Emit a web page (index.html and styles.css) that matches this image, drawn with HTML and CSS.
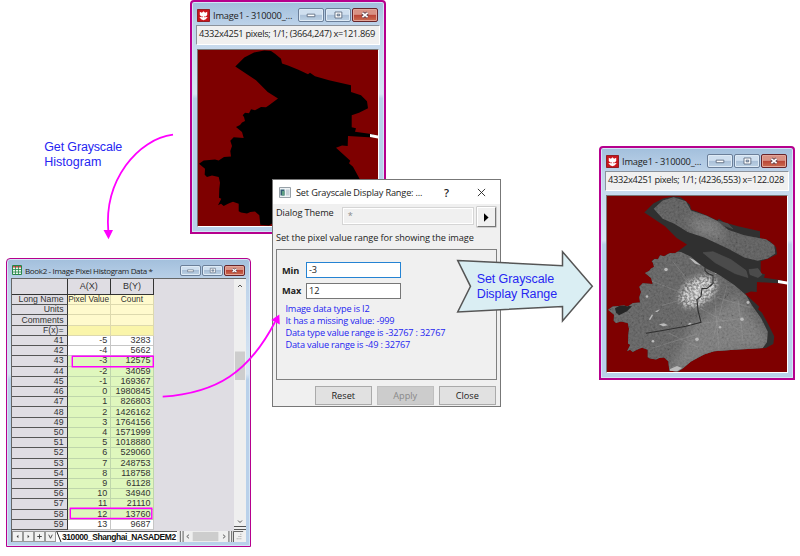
FILE: index.html
```
<!DOCTYPE html>
<html lang="en">
<head>
<meta charset="utf-8">
<title>Set Grayscale Display Range</title>
<link rel="stylesheet" href="styles.css">
</head>
<body>
<svg class="defs" aria-hidden="true">
  <defs>
    <path id="land" d="M234.3 66L243.3 57 253 52 263.3 50 270 50.500 274 53.300 280 58.300 281 63 287 65 298 69.500 307 74 309 72.500 314 76 328 80 350 85V91.700L360 95 366 101 367 108 358 112.700 350.700 115V127.300L355 128.300 354 131.700 372 134.200V137.500L347 136 346.700 146 341 145.500 335 147.700 349.300 161 348 163.300 352 167 358 178 364.300 190.700 363.300 198.300 356 202.300 342 203 324.300 204 304 205.700 294 209 281 216 272.700 223 268 226 259.300 225.300 258.300 215.700 254 212 249.300 212.300 246 214 240 213 237.700 211.700V204L232 202 229.300 203 227 204 222.700 206.300 220 204 217 205.700 220.300 199 218 198 218.300 189 219 183 217.700 177.300 211 175.700 206 177.300 203.700 175 204 169 198 164 202.700 160.700 214 159.500 217.700 160.700 223 157 230 156.700 229.300 151 231 146 229.300 140.700 232.700 137.300 242.700 138 241 132 235 127 239 125 241 122.300 244 121 243 117 241.700 115 244 112.500 248 113 250 109 254 110 260 106.700 265 107 268 105 277 98.300 266.700 91.700 255 80Z"/>
    <clipPath id="mainland"><path d="M0 0L44.700 65.500 51 60.500 62 55 74 56.200 84 61.200 88 64.500 99 72.800 112.300 79.500 127.300 89.500 139 99.500 145.700 111.200 154 122.800 160.700 136.200 160 146.800 155.700 152.800 156 177H0Z"/></clipPath>
    <clipPath id="landclip"><use href="#land" transform="translate(-197 -49.500)"/></clipPath>
    <filter id="grain" x="0" y="0" width="1" height="1"><feTurbulence type="fractalNoise" baseFrequency=".45" numOctaves="3" seed="8"/><feColorMatrix values=".9 .4 .2 0 -.35 .9 .4 .2 0 -.35 .9 .4 .2 0 -.35 0 0 0 0 1"/></filter>
    <filter id="speckle" x="-.5" y="-.5" width="2" height="2"><feGaussianBlur in="SourceGraphic" stdDeviation="3" result="b"/><feTurbulence type="fractalNoise" baseFrequency=".5" numOctaves="2" seed="3"/><feColorMatrix values="0 0 0 0 1 0 0 0 0 1 0 0 0 0 1 5 0 0 0 -2"/><feComposite in="b" operator="in"/></filter>
    <filter id="soft" x="-.6" y="-.6" width="2.200" height="2.200"><feGaussianBlur stdDeviation="5"/></filter>
    <filter id="fine"><feGaussianBlur stdDeviation=".6"/></filter>
    <clipPath id="isle"><path d="M46.700 12.800L55.700 4.500 66.700 1.200 79 5.200 84 14.500 99 19.500 112.300 26.200 121 34 137.300 39.500 159 43.500 167.300 49.500 168.300 57.800 160.700 62.800 150.700 65.200 137.300 61.800 120.700 52.800 97.300 41.800 80.700 36.200 67.300 27.800 55.700 22.800Z"/></clipPath>
  </defs>
</svg>

<main class="canvas">
  <section class="window image-window first">
    <header class="titlebar">
      <svg class="app" viewBox="0 0 14 14"><path fill="#c9151c" stroke="#8d1519" d="M.5.5h13v13H.5z"/><path fill="#fff" d="M3 3l2.300 1L7 2.300 8.700 4 11 3v3.500L9.500 8h-5L3 6.500zM2.500 8.500L6.500 9v-1h1v1l4-.5-2 2.500-2.500 1-2.500-1z"/></svg>
      <h2>Image1 - 310000_...</h2>
      <div class="controls"><i><svg viewBox="0 0 24 14"><path class="glyph" d="M7.500 6h9v3h-9z"/></svg></i><i><svg viewBox="0 0 24 14"><path class="glyph" d="M8.500 3.500h8v7h-8zM11 6h3v2h-3z"/></svg></i><i class="x"><svg viewBox="0 0 24 14"><path class="cross" d="M9 4.500l6 5m0-5l-6 5"/><path class="crossin" d="M9 4.500l6 5m0-5l-6 5"/></svg></i></div>
    </header>
    <p class="info"><span>4332x4251 pixels; 1/1; (3664,247) x=121.869</span></p>
    <svg class="picture" viewBox="197 49.500 180 177" preserveAspectRatio="none"><path fill="#7e0000" d="M197 49h181v179H197z"/><use href="#land"/><path fill="#fff" d="M369 134l8.500 1.500v3l-8.500-1.600z"/></svg>
  </section>

  <section class="window image-window second">
    <header class="titlebar">
      <svg class="app" viewBox="0 0 14 14"><path fill="#c9151c" stroke="#8d1519" d="M.5.5h13v13H.5z"/><path fill="#fff" d="M3 3l2.300 1L7 2.300 8.700 4 11 3v3.500L9.500 8h-5L3 6.500zM2.500 8.500L6.500 9v-1h1v1l4-.5-2 2.500-2.500 1-2.500-1z"/></svg>
      <h2>Image1 - 310000_...</h2>
      <div class="controls"><i><svg viewBox="0 0 24 14"><path class="glyph" d="M7.500 6h9v3h-9z"/></svg></i><i><svg viewBox="0 0 24 14"><path class="glyph" d="M8.500 3.500h8v7h-8zM11 6h3v2h-3z"/></svg></i><i class="x"><svg viewBox="0 0 24 14"><path class="cross" d="M9 4.500l6 5m0-5l-6 5"/><path class="crossin" d="M9 4.500l6 5m0-5l-6 5"/></svg></i></div>
    </header>
    <p class="info"><span>4332x4251 pixels; 1/1; (4236,553) x=122.028</span></p>
    <svg class="picture" viewBox="0 0 180 177" preserveAspectRatio="none">
      <path fill="#7e0000" d="M0 0h180v177H0z"/>
      <use href="#land" transform="translate(-197 -49.500)" fill="#303030"/>
      <g clip-path="url(#isle)"><path fill="#575757" d="M40 0h130v70H40z"/><path filter="url(#soft)" fill="#777" d="M80 20l30 5 10 20-30-6z"/><path filter="url(#grain)" opacity=".16" d="M40 0h130v70H40z"/></g>
      <g fill="#4b4b4b" stroke="#555" stroke-width=".5"><path d="M96 57l10-1 18 8 15 11 2 7-13-4-20-11zM142 74l9-1 4 6-4 3-8-3zM111 25l10 3 5 5-11-4z"/></g>
      <g clip-path="url(#mainland)"><g clip-path="url(#landclip)">
        <path fill="#5c5c5c" d="M0 50h180v127H0z"/>
        <path filter="url(#soft)" fill="#777" d="M85 130l45-30 35 50-65 12-40 20z"/>
        <path filter="url(#grain)" opacity=".17" d="M0 50h180v127H0z"/>
        <ellipse cx="91" cy="96" rx="14" ry="9" fill="#bbb" opacity=".6" filter="url(#soft)" transform="rotate(-35 91 96)"/>
        <ellipse cx="91" cy="96" rx="21" ry="13" fill="#e2e2e2" filter="url(#speckle)" transform="rotate(-35 91 96)"/>
        <path d="M8 113l5-3 12 1-5 5-8 4-3-3z" fill="#252525"/>
        <g fill="none" stroke="#a8a8a8" stroke-width=".6" opacity=".5" filter="url(#fine)"><path d="M43 85l44 17M107 95l5 60M88 129l48-6M75 80l20 21M55 110l35-10M45 153l45-14M93 97l50 15M90 111l44 25M120 90l-14 54M62 138l29 14M66 66l24 30M131 104l5 42"/></g>
        <g fill="#bbb" filter="url(#fine)"><circle cx="59" cy="74" r="1.800"/><circle cx="90" cy="144" r="1.800"/><circle cx="83" cy="129" r="1.500"/><circle cx="135" cy="124" r="1.800"/><circle cx="46" cy="146" r="1.300"/><circle cx="40" cy="101" r="1.300"/><circle cx="113" cy="132" r="1.200"/><circle cx="141" cy="107" r="1.500"/><circle cx="109" cy="77" r="1.500"/><path d="M52 129l5-1 4 2-5 1zM42 124l3-5 1 1-3 5zM48 116l5-2-3 3zM82 62l5 2 7 6-6-2zM63 174l7-3 5 2-6 4h-6z"/></g>
        <path fill="none" stroke="#303030" stroke-width="1.100" d="M98 72v3l3 3 5 2v8l-6 5h-5l-1 8-4 3 1 11 3 12-15 4-22 4-18 3"/>
      </g></g>
      <path fill="#fff" d="M171 84.500l9 1.500v3l-9-1.600z"/>
    </svg>
  </section>

  <section class="window book">
    <header class="titlebar">
      <svg class="app" viewBox="0 0 10 10"><path fill="#e9f6ec" stroke="#26874a" d="M.5.5h9v9h-9z"/><path fill="#d04545" d="M1 1h8v1.500H1z"/><path stroke="#26874a" d="M3.500 1v8M6.500 1v8M1 4.500h8M1 7h8" stroke-width=".8"/></svg>
      <h2>Book2 - Image Pixel Histogram Data *</h2>
      <div class="controls"><i><svg viewBox="0 0 24 14"><path class="glyph" d="M7.500 6h9v3h-9z"/></svg></i><i><svg viewBox="0 0 24 14"><path class="glyph" d="M8.500 3.500h8v7h-8zM11 6h3v2h-3z"/></svg></i><i class="x"><svg viewBox="0 0 24 14"><path class="cross" d="M9 4.500l6 5m0-5l-6 5"/><path class="crossin" d="M9 4.500l6 5m0-5l-6 5"/></svg></i></div>
    </header>
    <div class="sheet">
      <div class="upper">
        <table>
          <thead><tr><th></th><th>A(X)</th><th>B(Y)</th></tr></thead>
          <tbody>
            <tr class="label"><th>Long Name</th><td>Pixel Value</td><td>Count</td></tr>
            <tr class="label"><th>Units</th><td></td><td></td></tr>
            <tr class="label"><th>Comments</th><td></td><td></td></tr>
            <tr class="label fx"><th>F(x)=</th><td></td><td></td></tr>
            <tr><th>41</th><td>-5</td><td>3283</td></tr>
            <tr><th>42</th><td>-4</td><td>5662</td></tr>
            <tr class="g"><th>43</th><td>-3</td><td>12575</td></tr>
            <tr class="g"><th>44</th><td>-2</td><td>34059</td></tr>
            <tr class="g"><th>45</th><td>-1</td><td>169367</td></tr>
            <tr class="g"><th>46</th><td>0</td><td>1980845</td></tr>
            <tr class="g"><th>47</th><td>1</td><td>826803</td></tr>
            <tr class="g"><th>48</th><td>2</td><td>1426162</td></tr>
            <tr class="g"><th>49</th><td>3</td><td>1764156</td></tr>
            <tr class="g"><th>50</th><td>4</td><td>1571999</td></tr>
            <tr class="g"><th>51</th><td>5</td><td>1018880</td></tr>
            <tr class="g"><th>52</th><td>6</td><td>529060</td></tr>
            <tr class="g"><th>53</th><td>7</td><td>248753</td></tr>
            <tr class="g"><th>54</th><td>8</td><td>118758</td></tr>
            <tr class="g"><th>55</th><td>9</td><td>61128</td></tr>
            <tr class="g"><th>56</th><td>10</td><td>34940</td></tr>
            <tr class="g"><th>57</th><td>11</td><td>21110</td></tr>
            <tr class="g"><th>58</th><td>12</td><td>13760</td></tr>
            <tr><th>59</th><td>13</td><td>9687</td></tr>
          </tbody>
        </table>
        <svg class="vscroll" viewBox="0 0 12 252"><path fill="#efefef" d="M0 0h12v252H0z"/><path fill="#cdcdcd" d="M1 72.500h10v28.500H1z"/><path fill="none" stroke="#555" d="M4 8l2-2 2 2M4 241.500l2 2 2-2M0 247.500h12M0 250.500h12"/></svg>
      </div>
      <footer class="tabs">
        <div class="nav"><b><svg viewBox="0 0 10 10"><path d="M6 3v4L4 5z"/></svg></b><b><svg viewBox="0 0 10 10"><path d="M4 3v4l2-2z"/></svg></b><b><svg viewBox="0 0 10 10"><path d="M2.500 4.500h2v-2h1v2h2v1h-2v2h-1v-2h-2z"/></svg></b><b><svg viewBox="0 0 10 10"><path d="M3 3l2 4 2-4" fill="none" stroke="#444"/></svg></b></div>
        <div class="tab"><svg viewBox="0 0 6 11"><path d="M1 0l4 10" stroke="#222" fill="none"/></svg><span>310000_Shanghai_NASADEM2</span></div>
        <svg class="hscroll" viewBox="0 0 69 12"><path fill="#efefef" d="M0 0h69v12H0z"/><path fill="#cdcdcd" d="M14 1h28v10H14z"/><path fill="none" stroke="#555" d="M.5 0v12M3.500 0v12M53.500 0v12M56.500 0v12M10 4L7.500 6l2.500 2M47 4l2.500 2L47 8M58.500 12V.5H69"/><path fill="#999" d="M66 3h1v1h-1zM64 5.500h1v1h-1zM66 5.500h1v1h-1zM62 8h1v1h-1zM64 8h1v1h-1zM66 8h1v1h-1z"/></svg>
      </footer>
    </div>
  </section>

  <section class="dialog">
    <header><svg class="icon" viewBox="0 0 12 11"><path fill="#eef3f5" stroke="#98a1a8" d="M.5.5h11v10H.5z"/><path fill="#315d73" d="M1.500 2.500h4v6h-4z"/><path fill="#5d9f82" d="M3 4h2.500v4.500H3z"/><path fill="#c8d2da" d="M7 2.500h3.500v6H7z"/></svg><h2>Set Grayscale Display Range: ...</h2><span class="help">?</span><svg class="close" viewBox="0 0 10 10"><path d="M1 1l8 8m0-8L1 9" stroke="#222" fill="none"/></svg></header>
    <div class="theme"><label>Dialog Theme</label><div class="combo">*</div><button><svg viewBox="0 0 6 10"><path d="M0 0l5.500 5L0 10z"/></svg></button></div>
    <p class="hint">Set the pixel value range for showing the image</p>
    <div class="group">
      <div class="field"><label>Min</label><div class="input focus">-3</div></div>
      <div class="field"><label>Max</label><div class="input">12</div></div>
      <p class="notes"><span>Image data type is I2</span><br><span>It has a missing value: -999</span><br><span>Data type value range is -32767 : 32767</span><br><span>Data value range is -49 : 32767</span></p>
    </div>
    <div class="actions"><button>Reset</button><button class="disabled">Apply</button><button>Close</button></div>
  </section>

  <svg class="overlay" viewBox="0 0 800 556">
    <path fill="#daeef3" stroke="#555" stroke-width="1.500" d="M457.700 260.500L562.500 265.700V251.700L592.300 286.300 562.500 321V306.500L457.700 312 470.500 286.300z"/>
    <g fill="none" stroke="#ff00ff" stroke-width="1.800"><path d="M173 134.700C138 139 104 180 108.300 231"/><path d="M162.700 396.700C217 393 249 372 275 322"/><path stroke-width="1.400" d="M72.300 356.300h81v10.500h-81zM70.300 508.200h81.500v10.300H70.300z"/></g>
    <path fill="#ff00ff" d="M103.500 230h9.500l-4.500 9.300zM279.300 314.500l.5 10-8.500-4.500z"/>
    <g class="callout"><text x="44.300" y="151.300" textLength="78">Get Grayscale</text><text x="44.300" y="165.500" textLength="57">Histogram</text><text x="476.700" y="283" textLength="77.500">Set Grayscale</text><text x="476.700" y="297.500" textLength="80.500">Display Range</text></g>
  </svg>
</main>
</body>
</html>
```
FILE: styles.css
```
* { box-sizing: border-box; }
body { margin: 0; background: #fff; font-family: "Open Sans", "Noto Sans", sans-serif; color: #222; }
h2, p { margin: 0; font-weight: 400; }
svg { display: block; }
.defs { position: absolute; width: 0; height: 0; }
.canvas { position: relative; width: 800px; height: 556px; overflow: hidden; }

/* Windows placed on the canvas */
.window { position: absolute; border: 1.500px solid #b6008d; border-radius: 4px 4px 0 0; background: linear-gradient(#a2bfdc, #bfd4ea 25px, #d8e6f4 40%, #b9d1ea 42%); box-shadow: inset 0 0 0 1px #d3e6f5; white-space: nowrap; }
.first { left: 190px; top: 0; }
.second { left: 599px; top: 146px; }
.image-window { width: 196px; height: 234px; padding: 0 5px 5px; border-width: 2px; }
.titlebar { display: flex; align-items: center; }
.titlebar h2 { flex: 1; }
.image-window .titlebar { height: 23px; padding-top: 3px; padding-right: 1px; }
.image-window .app { width: 13px; height: 13px; }
.image-window h2 { font-size: 9.300px; margin-left: 3px; letter-spacing: -.2px; }
.controls { display: flex; gap: 1px; }
.controls i { width: 26px; height: 14px; border: 1px solid #6b7f99; border-radius: 2px; background: linear-gradient(#cfdfef 45%, #a9bfd7 50%, #bdd2e5); box-shadow: inset 0 0 0 1px #dfebf6; }
.controls svg { width: 100%; height: 100%; }
.controls .x { background: linear-gradient(#d89284 45%, #ba4435 50%, #ca6d51); border-color: #67252a; box-shadow: inset 0 0 0 1px #e4a598; }
.glyph { fill: #fff; stroke: #59677c; stroke-width: 1; fill-rule: evenodd; }
.cross { stroke: #64434b; stroke-width: 4; }
.crossin { stroke: #fff; stroke-width: 2; }
.info { height: 20px; margin: 0 -1px; background: #f0f0f0; border: 1px solid #8b929b; border-right-color: #fff; border-bottom-color: #fff; padding: 1px 2px; font-size: 9.300px; line-height: 13px; letter-spacing: -.34px; }
.picture { width: 182px; height: 178px; margin-top: 4px; border: 1px solid #777; border-right-color: #fff; border-bottom: 1px solid #fff; }

.book { left: 6px; top: 258px; width: 245px; height: 289px; padding: 0 4px 4px 4px; }
.book .titlebar { height: 19px; padding: 3px 1.500px 0 0; }
.book .app { width: 10px; height: 10px; margin-left: 1px; }
.book h2 { font-size: 8px; margin-left: 3px; letter-spacing: -.34px; }
.book .controls i { width: 21px; height: 11px; }
.sheet { height: 264px; background: #dfdde3; border: 1px solid #666; border-right: 0; }
.upper { display: flex; justify-content: space-between; height: 252px; }
table { border-collapse: separate; border-spacing: 0; table-layout: fixed; width: 142px; height: 251px; font: 9px/9px "Liberation Sans", sans-serif; color: #333; }
th, td { padding: 0; height: 10.220px; text-align: right; font-weight: 400; overflow: hidden; }
tbody th { width: 55px; padding-right: 3px; background: #dfdde3; border-right: 1.500px solid #333; border-bottom: 1px solid #555; font-size: 8.700px; }
thead th { height: 16px; text-align: center; border-right: 1px solid #333; border-bottom: 1px solid #333; }
thead th:first-child { width: 55.500px; }
td { background: #fff; border-right: 1px solid #c6c6c6; border-bottom: 1px solid #c6c6c6; padding-right: 2.500px; }
.label td { background: #fffacd; text-align: center; padding: 0; border-color: #ddd9ae; font-size: 8.300px; }
.fx td { background: #faf5aa; }
.g td { background: #dff7bd; border-color: #bfd6ab; }
.vscroll { width: 12px; height: 252px; }
.tabs { display: flex; height: 11px; background: #f0f0f0; font: bold 8.500px/11px "Liberation Sans", sans-serif; color: #111; }
.nav { display: flex; }
.nav b { width: 11px; border: 1px solid #999; background: #f1f1f1; }
.nav svg { width: 9px; height: 9px; fill: #444; }
.tab { display: flex; flex: 1; background: #fff; border-top: 1px solid #555; overflow: hidden; }
.tab svg { width: 6px; height: 11px; flex: none; }
.tab span { letter-spacing: -.42px; }
.hscroll { width: 69px; height: 11px; flex: none; }

/* Range dialog */
.dialog { position: absolute; left: 272px; top: 179px; width: 229px; height: 228px; border: 1px solid #777; background: #f0f0f0; font-size: 9.200px; letter-spacing: -.1px; white-space: nowrap; }
.dialog header { display: flex; align-items: center; height: 24px; background: #fff; padding: 0 14px 0 6px; }
.icon { width: 12px; height: 11px; }
.dialog h2 { flex: 1; font-size: 9.200px; margin-left: 5px; letter-spacing: -.17px; }
.help { font-size: 11px; width: 33px; font-weight: 600; }
.close { width: 9px; height: 9px; }
.theme { display: flex; padding: 3px 4px 0 3px; height: 24px; }
.theme label { width: 66px; line-height: 12px; }
.combo { width: 133px; height: 18px; border: 1px solid #d5d5d5; box-shadow: inset 0 0 0 1px #fff; padding-left: 5px; line-height: 16px; color: #888; }
.theme button { width: 19px; height: 20px; margin-left: 3px; padding: 0 0 0 6px; border: 1px solid; border-color: #fff #777 #777 #fff; background: #f0f0f0; box-shadow: 0 0 0 .5px #aaa; }
.theme svg { width: 5px; height: 9px; }
.hint { height: 21px; padding: 3px 0 0 3px; line-height: 13px; }
.group { width: 221px; height: 131px; margin-left: 3px; border: 1px solid #808080; padding: 12px 5px 0; }
.field { display: flex; align-items: center; height: 16px; margin-bottom: 4.500px; }
.field label { width: 24px; font-weight: 700; }
.input { width: 95px; height: 16px; background: #fff; border: 1px solid #777; line-height: 14px; padding-left: 2px; }
.input.focus { border-color: #2583d3; }
.notes { color: #2424f0; line-height: 12px; margin: 0 0 0 3.500px; letter-spacing: -.2px; }
.actions { display: flex; gap: 4.500px; justify-content: flex-end; margin: 6px 4px 0 0; }
.actions button { width: 57.500px; height: 19px; padding: 0; background: #e1e1e1; border: 1px solid #aaa; font: inherit; color: #222; }
.actions .disabled { background: #ccc; border-color: #bfbfbf; color: #888; }

.overlay { position: absolute; left: 0; top: 0; width: 800px; height: 556px; }
.callout { font: 12.500px "Liberation Sans", sans-serif; fill: #2626f2; }
```
